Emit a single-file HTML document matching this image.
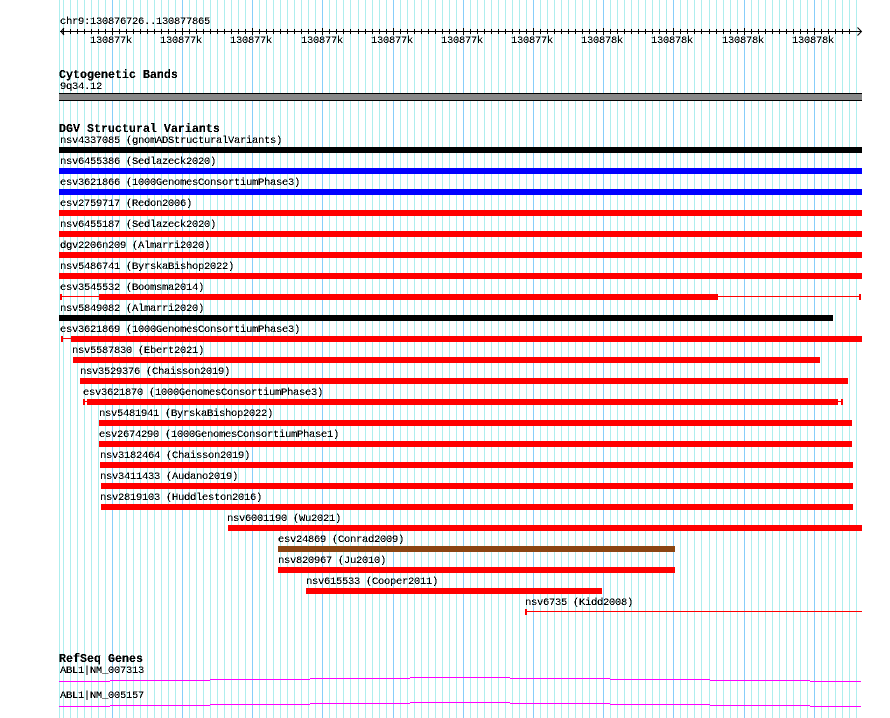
<!DOCTYPE html>
<html><head><meta charset="utf-8"><title>Tracks</title>
<style>
html,body{margin:0;padding:0;background:#fff;width:890px;height:718px;overflow:hidden}
svg{position:absolute;left:0;top:0}
text{font-family:"Liberation Mono","DejaVu Sans Mono",monospace;font-size:10.5px;letter-spacing:-.3px;fill:#000;transform:translateY(-1px)}
text.h{font-weight:bold;font-size:11.67px;letter-spacing:0;transform:none}
</style></head><body>
<svg width="890" height="718" viewBox="0 0 890 718" shape-rendering="crispEdges">
<defs>
<path id="g" d="M63.5 0V718M70.5 0V718M77.5 0V718M84.5 0V718M91.5 0V718M98.5 0V718M105.5 0V718M119.5 0V718M126.5 0V718M133.5 0V718M140.5 0V718M147.5 0V718M154.5 0V718M161.5 0V718M168.5 0V718M175.5 0V718M189.5 0V718M196.5 0V718M203.5 0V718M210.5 0V718M217.5 0V718M224.5 0V718M231.5 0V718M238.5 0V718M245.5 0V718M259.5 0V718M266.5 0V718M273.5 0V718M280.5 0V718M287.5 0V718M294.5 0V718M301.5 0V718M308.5 0V718M315.5 0V718M329.5 0V718M336.5 0V718M343.5 0V718M350.5 0V718M358.5 0V718M365.5 0V718M372.5 0V718M379.5 0V718M386.5 0V718M400.5 0V718M407.5 0V718M414.5 0V718M421.5 0V718M428.5 0V718M435.5 0V718M442.5 0V718M449.5 0V718M456.5 0V718M470.5 0V718M477.5 0V718M484.5 0V718M491.5 0V718M498.5 0V718M505.5 0V718M512.5 0V718M519.5 0V718M526.5 0V718M540.5 0V718M547.5 0V718M554.5 0V718M561.5 0V718M568.5 0V718M575.5 0V718M582.5 0V718M589.5 0V718M596.5 0V718M610.5 0V718M617.5 0V718M624.5 0V718M631.5 0V718M638.5 0V718M645.5 0V718M652.5 0V718M659.5 0V718M666.5 0V718M680.5 0V718M687.5 0V718M694.5 0V718M701.5 0V718M709.5 0V718M716.5 0V718M723.5 0V718M730.5 0V718M737.5 0V718M751.5 0V718M758.5 0V718M765.5 0V718M772.5 0V718M779.5 0V718M786.5 0V718M793.5 0V718M800.5 0V718M807.5 0V718M821.5 0V718M828.5 0V718M835.5 0V718M842.5 0V718M849.5 0V718M856.5 0V718"/>
<path id="m" d="M112.5 0V718M182.5 0V718M252.5 0V718M322.5 0V718M393.5 0V718M463.5 0V718M533.5 0V718M603.5 0V718M673.5 0V718M744.5 0V718M814.5 0V718"/>
<clipPath id="t"><rect x="0" y="29" width="853" height="5"/></clipPath>
<clipPath id="t2"><rect x="0" y="28" width="853" height="7"/></clipPath>
<filter id="a" x="0" y="0" width="100%" height="100%" color-interpolation-filters="sRGB"><feComponentTransfer><feFuncA type="discrete" tableValues="0 1 1"/></feComponentTransfer></filter>
</defs>
<use href="#g" stroke="#aeeeee" stroke-width="1"/>
<path d="M59.5 0V718" stroke="#aeeeee"/>
<use href="#m" stroke="#87cefa" stroke-width="1"/>

<!-- ruler -->
<path d="M60 31.5H861" stroke="#000"/>
<path d="M64 28L61 31.5L64 35M857.5 27.5L861.5 31.5L857.5 35.5" stroke="#000" fill="none" shape-rendering="auto"/>
<g clip-path="url(#t)"><use href="#g" stroke="#000"/></g>
<g clip-path="url(#t2)"><use href="#m" stroke="#000"/></g>

<!-- cytoband -->
<rect x="59" y="93" width="803" height="8" fill="#000"/>
<rect x="59" y="94" width="803" height="6" fill="#888"/>

<!-- bars -->
<g fill="#f00">
<rect x="59" y="147" width="803" height="6" fill="#000"/>
<rect x="59" y="168" width="803" height="6" fill="#00f"/>
<rect x="59" y="189" width="803" height="6" fill="#00f"/>
<rect x="59" y="210" width="803" height="6"/>
<rect x="59" y="231" width="803" height="6"/>
<rect x="59" y="252" width="803" height="6"/>
<rect x="59" y="273" width="803" height="6"/>
<rect x="60" y="294" width="2" height="6"/><rect x="60" y="296" width="801" height="1"/><rect x="99" y="294" width="619" height="6"/><rect x="859" y="294" width="2" height="6"/>
<rect x="59" y="315" width="774" height="6" fill="#000"/>
<rect x="61" y="336" width="2" height="6"/><rect x="61" y="338" width="10" height="1"/><rect x="71" y="336" width="791" height="6"/>
<rect x="73" y="357" width="747" height="6"/>
<rect x="80" y="378" width="768" height="6"/>
<rect x="83" y="399" width="2" height="6"/><rect x="83" y="401" width="760" height="1"/><rect x="87" y="399" width="751" height="6"/><rect x="841" y="399" width="2" height="6"/>
<rect x="99" y="420" width="753" height="6"/>
<rect x="99" y="441" width="753" height="6"/>
<rect x="100" y="462" width="753" height="6"/>
<rect x="101" y="483" width="752" height="6"/>
<rect x="101" y="504" width="752" height="6"/>
<rect x="228" y="525" width="634" height="6"/>
<rect x="278" y="546" width="397" height="6" fill="#8b4513"/>
<rect x="278" y="567" width="397" height="6"/>
<rect x="306" y="588" width="296" height="6"/>
<rect x="525" y="609" width="2" height="6"/><rect x="525" y="611" width="337" height="1"/>
</g>

<!-- genes -->
<path d="M59 681.5H110M110 680.5H210M210 679.5H310M310 678.5H410M410 677.5H510M510 678.5H610M610 679.5H710M710 680.5H810M810 681.5H861M59 706.5H110M110 705.5H210M210 704.5H310M310 703.5H410M410 702.5H510M510 703.5H610M610 704.5H710M710 705.5H810M810 706.5H861" stroke="#f0f" fill="none"/>

<g filter="url(#a)" shape-rendering="auto">
<text x="60" y="25">chr9:130876726..130877865</text>
<text x="90" y="44">130877k</text><text x="160" y="44">130877k</text><text x="230" y="44">130877k</text><text x="301" y="44">130877k</text><text x="371" y="44">130877k</text><text x="441" y="44">130877k</text><text x="511" y="44">130877k</text><text x="581" y="44">130878k</text><text x="651" y="44">130878k</text><text x="722" y="44">130878k</text><text x="792" y="44">130878k</text>
<text class="h" x="59" y="78">Cytogenetic Bands</text>
<text x="60" y="90">9q34.12</text>
<text class="h" x="59" y="132">DGV Structural Variants</text>
<text x="60" y="144">nsv4337085 (gnomADStructuralVariants)</text>
<text x="60" y="165">nsv6455386 (Sedlazeck2020)</text>
<text x="60" y="186">esv3621866 (1000GenomesConsortiumPhase3)</text>
<text x="60" y="207">esv2759717 (Redon2006)</text>
<text x="60" y="228">nsv6455187 (Sedlazeck2020)</text>
<text x="60" y="249">dgv2206n209 (Almarri2020)</text>
<text x="60" y="270">nsv5486741 (ByrskaBishop2022)</text>
<text x="60" y="291">esv3545532 (Boomsma2014)</text>
<text x="60" y="312">nsv5849082 (Almarri2020)</text>
<text x="60" y="333">esv3621869 (1000GenomesConsortiumPhase3)</text>
<text x="72" y="354">nsv5587830 (Ebert2021)</text>
<text x="80" y="375">nsv3529376 (Chaisson2019)</text>
<text x="83" y="396">esv3621870 (1000GenomesConsortiumPhase3)</text>
<text x="99" y="417">nsv5481941 (ByrskaBishop2022)</text>
<text x="99" y="438">esv2674290 (1000GenomesConsortiumPhase1)</text>
<text x="100" y="459">nsv3182464 (Chaisson2019)</text>
<text x="100" y="480">nsv3411433 (Audano2019)</text>
<text x="100" y="501">nsv2819103 (Huddleston2016)</text>
<text x="227" y="522">nsv6001190 (Wu2021)</text>
<text x="278" y="543">esv24869 (Conrad2009)</text>
<text x="278" y="564">nsv820967 (Ju2010)</text>
<text x="306" y="585">nsv615533 (Cooper2011)</text>
<text x="525" y="606">nsv6735 (Kidd2008)</text>
<text class="h" x="59" y="662">RefSeq Genes</text>
<text x="60" y="674">ABL1|NM_007313</text>
<text x="60" y="699">ABL1|NM_005157</text>
</g>
</svg>
</body></html>
